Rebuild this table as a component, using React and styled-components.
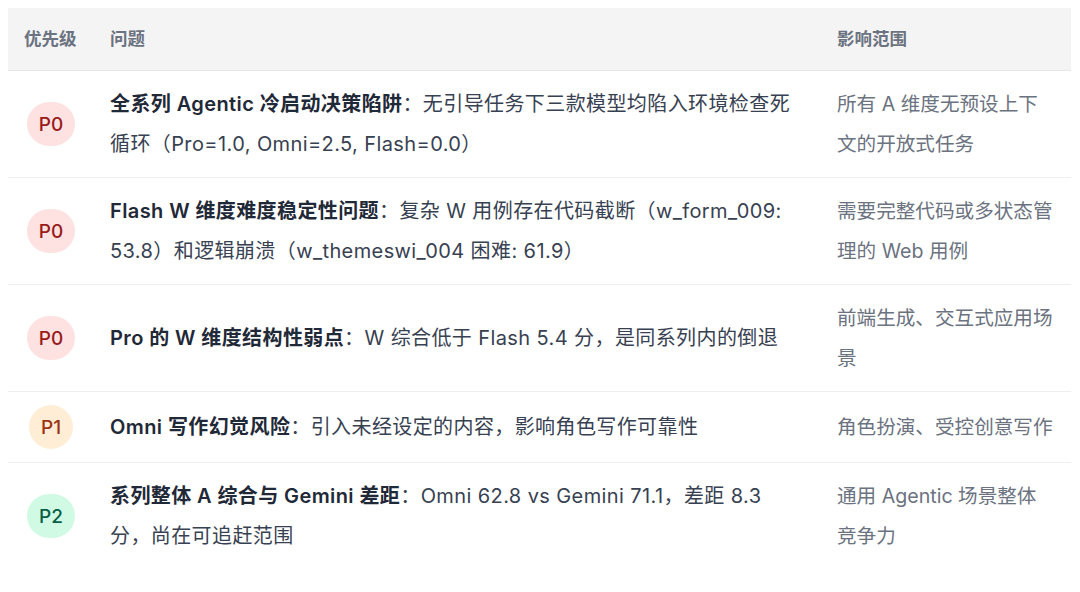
import React from "react";
import styled, { createGlobalStyle } from "styled-components";

const Global = createGlobalStyle`
  html, body { margin: 0; padding: 0; background: #ffffff; }
  body {
    padding: 8px;
    font-family: Inter, "Noto Sans CJK SC", sans-serif;
  }
`;

const Table = styled.table`
  width: 1063px;
  border-collapse: collapse;
  table-layout: fixed;
`;

const HeadRow = styled.tr`
  background: #f4f4f5;
  border-bottom: 1px solid #e5e7eb;
`;

const Th = styled.th`
  text-align: left;
  padding: 18px 16px;
  font-size: 17.5px;
  line-height: 26px;
  font-weight: 600;
  color: #6b7280;
`;

const Row = styled.tr`
  border-bottom: ${(p) => (p.$last ? "none" : "1px solid #eeeff1")};
`;

const Td = styled.td`
  padding: 13px ${(p) => (p.$muted ? "18px" : "16px")} 13px 16px;
  vertical-align: middle;
  font-size: ${(p) => (p.$muted ? "19.6px" : "20px")};
  letter-spacing: ${(p) => (p.$muted ? "0" : "0.4px")};
  line-height: 40px;
  color: ${(p) => (p.$muted ? "#6b7280" : "#374151")};
  text-align: ${(p) => (p.$center ? "center" : "left")};
`;

const Strong = styled.strong`
  font-weight: 600;
  color: #1f2937;
`;

const tones = {
  P0: { bg: "#fee2e2", fg: "#991b1b" },
  P1: { bg: "#ffedd5", fg: "#9a3412" },
  P2: { bg: "#d1fae5", fg: "#065f46" },
};

const Badge = styled.span`
  display: inline-flex;
  align-items: center;
  justify-content: center;
  height: 44px;
  padding: 0 12px;
  border-radius: 22px;
  font-size: 19px;
  line-height: 1;
  letter-spacing: 0;
  font-weight: 500;
  background: ${(p) => tones[p.$level].bg};
  color: ${(p) => tones[p.$level].fg};
  vertical-align: middle;
`;

const rows = [
  {
    level: "P0",
    title: "全系列 Agentic 冷启动决策陷阱",
    text: "无引导任务下三款模型均陷入环境检查死循环（Pro=1.0, Omni=2.5, Flash=0.0）",
    scope: "所有 A 维度无预设上下文的开放式任务",
  },
  {
    level: "P0",
    title: "Flash W 维度难度稳定性问题",
    text: "复杂 W 用例存在代码截断（w_form_009: 53.8）和逻辑崩溃（w_themeswi_004 困难: 61.9）",
    scope: "需要完整代码或多状态管理的 Web 用例",
  },
  {
    level: "P0",
    title: "Pro 的 W 维度结构性弱点",
    text: "W 综合低于 Flash 5.4 分，是同系列内的倒退",
    scope: "前端生成、交互式应用场景",
  },
  {
    level: "P1",
    title: "Omni 写作幻觉风险",
    text: "引入未经设定的内容，影响角色写作可靠性",
    scope: "角色扮演、受控创意写作",
  },
  {
    level: "P2",
    title: "系列整体 A 综合与 Gemini 差距",
    text: "Omni 62.8 vs Gemini 71.1，差距 8.3 分，尚在可追赶范围",
    scope: "通用 Agentic 场景整体竞争力",
  },
];

export default function App() {
  return (
    <>
      <Global />
      <Table>
        <colgroup>
          <col style={{ width: 86 }} />
          <col style={{ width: 727 }} />
          <col style={{ width: 250 }} />
        </colgroup>
        <thead>
          <HeadRow>
            <Th>优先级</Th>
            <Th>问题</Th>
            <Th>影响范围</Th>
          </HeadRow>
        </thead>
        <tbody>
          {rows.map((r, i) => (
            <Row key={i} $last={i === rows.length - 1}>
              <Td $center>
                <Badge $level={r.level}>{r.level}</Badge>
              </Td>
              <Td>
                <Strong>{r.title}</Strong>：{r.text}
              </Td>
              <Td $muted>{r.scope}</Td>
            </Row>
          ))}
        </tbody>
      </Table>
    </>
  );
}
